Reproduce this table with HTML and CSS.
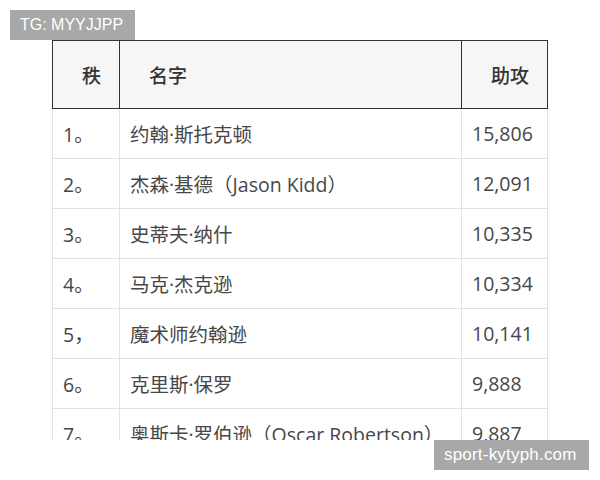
FILE: index.html
```html
<!DOCTYPE html>
<html lang="zh">
<head>
<meta charset="utf-8">
<link rel="stylesheet" href="styles.css">
</head>
<body>
<div class="page">
  <div class="tag">TG: MYYJJPP</div>
  <table class="rank">
    <colgroup>
      <col class="c-rank">
      <col class="c-name">
      <col class="c-num">
    </colgroup>
    <thead>
      <tr><th>秩</th><th>名字</th><th>助攻</th></tr>
    </thead>
    <tbody>
      <tr><td>1。</td><td>约翰·斯托克顿</td><td>15,806</td></tr>
      <tr><td>2。</td><td>杰森·基德（Jason Kidd）</td><td>12,091</td></tr>
      <tr><td>3。</td><td>史蒂夫·纳什</td><td>10,335</td></tr>
      <tr><td>4。</td><td>马克·杰克逊</td><td>10,334</td></tr>
      <tr><td>5，</td><td>魔术师约翰逊</td><td>10,141</td></tr>
      <tr><td>6。</td><td>克里斯·保罗</td><td>9,888</td></tr>
      <tr><td>7。</td><td>奥斯卡·罗伯逊（Oscar Robertson）</td><td>9,887</td></tr>
    </tbody>
  </table>
  <div class="mark">sport-kytyph.com</div>
</div>
</body>
</html>
```
FILE: styles.css
```css
html, body {
  margin: 0;
  padding: 0;
  background: #fff;
}
.page {
  position: relative;
  width: 600px;
  height: 440px;
  overflow: hidden;
  padding-top: 40px;
  box-sizing: border-box;
}
.tag {
  position: absolute;
  left: 10px;
  top: 10px;
  width: 125px;
  height: 30px;
  background: #a8a8a8;
  color: #fff;
  font-family: "Liberation Sans", Arial, sans-serif;
  font-size: 16px;
  line-height: 30px;
  padding-left: 10px;
  box-sizing: border-box;
}
.mark {
  position: fixed;
  left: 434px;
  top: 440px;
  width: 155px;
  height: 30px;
  background: #a8a8a8;
  color: #fff;
  font-family: "Liberation Sans", Arial, sans-serif;
  font-size: 17px;
  letter-spacing: 0.2px;
  line-height: 30px;
  padding-left: 10px;
  box-sizing: border-box;
}
.rank {
  margin-left: 52px;
  width: 495px;
  border-collapse: collapse;
  table-layout: fixed;
  font-family: "Open Sans", "Noto Sans CJK SC", sans-serif;
  font-size: 19.5px;
  color: #474747;
}
.c-rank { width: 67px; }
.c-name { width: 342px; }
.c-num { width: 86px; }
.rank th {
  height: 67px;
  background: #f6f6f6;
  border: 1px solid #333;
  text-align: left;
  padding: 0 0 0 29px;
  font-family: "Noto Sans CJK SC", sans-serif;
  font-weight: 500;
  font-size: 19px;
  color: #333;
}
.rank td {
  height: 49px;
  border: 1px solid #e2e2e2;
  padding: 0 0 0 10px;
  white-space: nowrap;
  overflow: hidden;
}
```
